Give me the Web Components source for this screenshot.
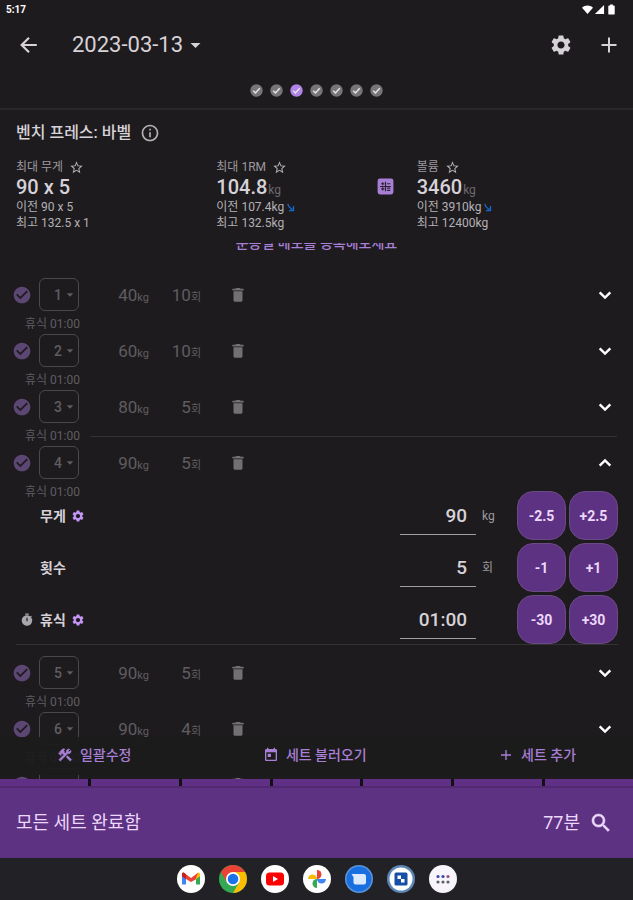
<!DOCTYPE html>
<html lang="ko">
<head>
<meta charset="utf-8">
<meta name="viewport" content="width=device-width, initial-scale=1">
<title>벤치 프레스: 바벨</title>
<style>
  html, body { margin: 0; height: 100%; }
  body {
    --bg: #1e1b1e; --text: #d6d2d8; --muted: #9c999e; --dim: #5f5d61; --line: #353236;
    --accent: #a87fd6; --purple: #5e3282; --lilac: #ecd8fc;
    background: var(--bg); color: var(--text);
    font-family: Roboto, "Noto Sans CJK KR", sans-serif;
  }
</style>
</head>
<body>
<workout-screen>
  <status-bar slot="top" time="5:17"></status-bar>
  <app-header slot="top">2023-03-13</app-header>
  <exercise-dots slot="top" count="7" current="3"></exercise-dots>

  <exercise-summary slot="top" name="벤치 프레스: 바벨">
    <stat-card label="최대 무게" value="90 x 5" previous="90 x 5" best="132.5 x 1"></stat-card>
    <stat-card label="최대 1RM" value="104.8" unit="kg" previous="107.4kg" best="132.5kg" down calc></stat-card>
    <stat-card label="볼륨" value="3460" unit="kg" previous="3910kg" best="12400kg" down></stat-card>
  </exercise-summary>

  <memo-link>운동별 메모를 등록해보세요</memo-link>
  <set-row number="1" weight="40" reps="10" rest="01:00"></set-row>
  <set-row number="2" weight="60" reps="10" rest="01:00"></set-row>
  <set-row number="3" weight="80" reps="5" rest="01:00" divider></set-row>
  <set-row number="4" weight="90" reps="5" rest="01:00" open>
    <value-editor label="무게" value="90" unit="kg" step="2.5" gear></value-editor>
    <value-editor label="횟수" value="5" unit="회" step="1"></value-editor>
    <value-editor label="휴식" value="01:00" step="30" gear timer></value-editor>
  </set-row>
  <set-row number="5" weight="90" reps="5" rest="01:00"></set-row>
  <set-row number="6" weight="90" reps="4" rest="01:00"></set-row>
  <set-row number="7" weight="80" reps="10"></set-row>

  <action-bar slot="actions">
    <action-button icon="tools">일괄수정</action-button>
    <action-button icon="calendar">세트 불러오기</action-button>
    <action-button icon="plus">세트 추가</action-button>
  </action-bar>
  <complete-bar slot="bottom" segments="7" duration="77분">모든 세트 완료함</complete-bar>
  <task-bar slot="bottom"></task-bar>
</workout-screen>

<script>
const ICONS = {
  back: '<path d="M20.5 12H4M12 4l-8 8 8 8" fill="none" stroke="currentColor" stroke-width="2.4"/>',
  caret: '<path d="M4 8h16l-8 8z"/>',
  gear: '<path d="M19.14 12.94c.04-.3.06-.61.06-.94 0-.32-.02-.64-.07-.94l2.03-1.58c.18-.14.23-.41.12-.61l-1.92-3.32c-.12-.22-.37-.29-.59-.22l-2.39.96c-.5-.38-1.03-.7-1.62-.94l-.36-2.54c-.04-.24-.24-.41-.48-.41h-3.84c-.24 0-.43.17-.47.41l-.36 2.54c-.59.24-1.13.57-1.62.94l-2.39-.96c-.22-.08-.47 0-.59.22L2.74 8.87c-.12.21-.08.47.12.61l2.03 1.58c-.05.3-.09.63-.09.94s.02.64.07.94l-2.03 1.58c-.18.14-.23.41-.12.61l1.92 3.32c.12.22.37.29.59.22l2.39-.96c.5.38 1.03.7 1.62.94l.36 2.54c.05.24.24.41.48.41h3.84c.24 0 .44-.17.47-.41l.36-2.54c.59-.24 1.13-.56 1.62-.94l2.39.96c.22.08.47 0 .59-.22l1.92-3.32c.12-.22.07-.47-.12-.61l-2.01-1.58zM12 15.6c-1.98 0-3.6-1.62-3.6-3.6s1.62-3.6 3.6-3.6 3.6 1.62 3.6 3.6-1.62 3.6-3.6 3.6z"/>',
  plus: '<path d="M12 4.5v15M4.5 12h15" fill="none" stroke="currentColor" stroke-width="2"/>',
  info: '<path d="M11 7h2v2h-2zm0 4h2v6h-2zm1-9C6.48 2 2 6.48 2 12s4.48 10 10 10 10-4.48 10-10S17.52 2 12 2zm0 18c-4.41 0-8-3.59-8-8s3.59-8 8-8 8 3.59 8 8-3.59 8-8 8z"/>',
  star: '<path d="M22 9.24l-7.19-.62L12 2 9.19 8.63 2 9.24l5.46 4.73L5.82 21 12 17.27 18.18 21l-1.63-7.03L22 9.24zM12 15.4l-3.76 2.27 1-4.28-3.32-2.88 4.38-.38L12 6.1l1.71 4.04 4.38.38-3.32 2.88 1 4.28L12 15.4z"/>',
  trend: '<path d="M5 2q1 9 12 15M20 8v12H8" fill="none" stroke="currentColor" stroke-width="3.6"/>',
  calc: '<rect x="2" y="2" width="20" height="20" rx="3"/><path d="M6.5 8.500h4M14 8.500h4M8.500 6.500v4M6.500 15h4M8.500 13v4M14 14h4M14 17h4M5 12h14M12 6v12" fill="none" stroke="#2c2333" stroke-width="1.5"/>',
  check: '<path d="M12 2C6.48 2 2 6.48 2 12s4.48 10 10 10 10-4.48 10-10S17.52 2 12 2zm-2 15l-5-5 1.41-1.41L10 14.17l7.59-7.59L19 8l-9 9z"/>',
  dot: '<circle cx="12" cy="12" r="11.5"/><path d="M6 12.5l4 4 8-8.500" fill="none" stroke="#e6e4e6" stroke-width="2.8"/>',
  trash: '<path d="M6 19c0 1.1.9 2 2 2h8c1.1 0 2-.9 2-2V7H6v12zM19.5 3.500h-4l-1-1h-5l-1 1h-4v2.500h15z"/>',
  down: '<path d="M4 8l8 8 8-8" fill="none" stroke="currentColor" stroke-width="3.6"/>',
  up: '<path d="M4 16l8-8 8 8" fill="none" stroke="currentColor" stroke-width="3.6"/>',
  timer: '<path d="M15 1H9v2h6V1zm4.03 6.39 1.42-1.42c-.43-.51-.9-.99-1.41-1.41l-1.42 1.42A8.962 8.962 0 0 0 12 4c-4.97 0-9 4.03-9 9s4.02 9 9 9a8.994 8.994 0 0 0 7.03-14.61zM13 14h-2V8h2v6z"/>',
  tools: '<path d="M13.78 15.17l2.12-2.12 6 6-2.12 2.12zM17.5 10c1.93 0 3.5-1.57 3.5-3.5 0-.58-.16-1.12-.41-1.6l-2.7 2.7-1.49-1.49 2.7-2.7c-.48-.25-1.02-.41-1.6-.41C15.57 3 14 4.57 14 6.5c0 .41.08.8.21 1.16l-1.85 1.85-1.78-1.78.71-.71-1.41-1.41L12 3.49c-1.17-1.17-3.07-1.17-4.24 0L4.22 7.03l1.41 1.41H2.81l-.71.71 3.54 3.54.71-.71V9.15l1.41 1.41.71-.71 1.78 1.78-7.41 7.41 2.12 2.12L16.34 9.79c.36.13.75.21 1.16.21z" stroke="currentColor" stroke-width=".8"/>',
  calendar: '<path d="M19 3h-1V1h-2v2H8V1H6v2H5c-1.11 0-1.99.9-1.99 2L3 19c0 1.1.89 2 2 2h14c1.1 0 2-.9 2-2V5c0-1.1-.9-2-2-2zm0 16H5V8h14v11zM7 10h5v5H7z"/>',
  search: '<path d="M15.5 14h-.79l-.28-.27C15.41 12.59 16 11.11 16 9.5 16 5.91 13.09 3 9.5 3S3 5.91 3 9.5 5.91 16 9.5 16c1.61 0 3.09-.59 4.23-1.57l.27.28v.79l5 4.99L20.49 19l-4.99-5zm-6 0C7.01 14 5 11.99 5 9.5S7.01 5 9.5 5 14 7.01 14 9.5 11.99 14 9.5 14z" stroke="currentColor" stroke-width=".5"/>',
  wifi: '<path d="M12 22L0 8C3 4.500 7.500 3 12 3s9 1.500 12 5z"/>',
  signal: '<path d="M2 22L22 2v20z"/>',
  battery: '<path d="M9 1h6v2h2a2 2 0 0 1 2 2v16a2 2 0 0 1-2 2H7a2 2 0 0 1-2-2V5a2 2 0 0 1 2-2h2z"/>'
};

const APPS = {
  Gmail: '<circle cx="14" cy="14" r="14" fill="#fff"/><path d="M5 9.5v10h4v-7z" fill="#4285f4"/><path d="M23 9.5v10h-4v-7z" fill="#34a853"/><path d="M19 9.2l2-1.4q2-.8 2 1.7v1.7l-4 3z" fill="#fbbc04"/><path d="M5 11.2V9.500q0-2.500 2-1.700l7 5.200 7-5.200-2 5.400v1L14 17l-5-3z" fill="#ea4335"/><path d="M5 9.500q0-2.500 2-1.700l2 1.500v4.900l-4-3z" fill="#c5221f"/>',
  Chrome: '<circle cx="14" cy="14" r="14" fill="#34a853"/><path d="M14 14L1.900 7A14 14 0 0 1 26.100 7z" fill="#ea4335"/><path d="M14 7h12.100A14 14 0 0 1 14 28l6-10.500z" fill="#fbbc04"/><path d="M1.900 7L8 17.500 14 7z" fill="#ea4335"/><circle cx="14" cy="14" r="7" fill="#fff"/><circle cx="14" cy="14" r="5.300" fill="#1a73e8"/>',
  YouTube: '<circle cx="14" cy="14" r="14" fill="#fff"/><rect x="5" y="7.500" width="18" height="13" rx="3.500" fill="#f00"/><path d="M12 11v6l5-3z" fill="#fff"/>',
  Photos: '<circle cx="14" cy="14" r="14" fill="#fff"/><path d="M14 14V5a4.500 4.500 0 0 1 0 9z" fill="#ea4335"/><path d="M14 14h9a4.500 4.500 0 0 1-9 0z" fill="#4285f4"/><path d="M14 14v9a4.500 4.500 0 0 1 0-9z" fill="#34a853"/><path d="M14 14H5a4.500 4.500 0 0 1 9 0z" fill="#fbbc04"/>',
  Messages: '<circle cx="14" cy="14" r="14" fill="#5b93da"/><circle cx="14" cy="14" r="12.500" fill="#1a6fe0"/><path d="M6.500 9H19q2 0 2 2v6.500q0 2-2 2h-8.500q-2 0-2-2V12z" fill="#dbe9fd"/>',
  Dice: '<circle cx="14" cy="14" r="14" fill="#5d86b5"/><circle cx="14" cy="14" r="11.500" fill="#fff"/><rect x="7.500" y="7.500" width="13" height="13" rx="1.500" fill="#174ea6"/><path d="M10.500 10.500h3.500v3.500h-3.500zM14 14h3.500v3.500H14z" fill="#fff"/>',
  Apps: '<circle cx="14" cy="14" r="14" fill="#f7f5fb"/><g fill="#3949ab"><circle cx="9" cy="11.500" r="1.600"/><circle cx="14" cy="11.500" r="1.600"/></g><circle cx="19" cy="11.500" r="1.600" fill="#a0506e"/><g fill="#5f6368"><circle cx="9" cy="17" r="1.600"/><circle cx="14" cy="17" r="1.600"/><circle cx="19" cy="17" r="1.600"/></g>'
};

const RESET = `
  *, *::before { box-sizing: border-box; }
  :host { box-sizing: border-box; }
  button, input, select { font: inherit; color: inherit; background: none; border: 0; margin: 0; padding: 0; }
  button { cursor: pointer; display: inline-flex; align-items: center; justify-content: center; }
`;

/* Base class: renders styles and markup into an open shadow root. */
class Base extends HTMLElement {
  connectedCallback() {
    if (this.shadowRoot) return;
    const t = document.createElement('template');
    t.innerHTML = `<style>${RESET}${this.css()}</style>${this.html()}`;
    this.attachShadow({ mode: 'open' }).append(t.content.cloneNode(true));
    this.ready();
  }
  a(n) { return this.getAttribute(n) || ''; }
  css() { return ''; }
  html() { return '<slot></slot>'; }
  ready() {}
}

class UiIcon extends Base {
  css() { return `:host { display: inline-block; flex: none; width: var(--size, 24px); height: var(--size, 24px); }
    svg { display: block; width: 100%; height: 100%; fill: currentColor; }`; }
  html() { return `<svg viewBox="0 0 24 24" aria-hidden="true">${ICONS[this.a('name')]}</svg>`; }
}

class WorkoutScreen extends Base {
  css() { return `:host { display: flex; flex-direction: column; height: 100vh; overflow: hidden; }
    .list { flex: 1; min-height: 0; overflow: hidden; position: relative; }
    .over { position: absolute; left: 0; right: 0; bottom: 4px; }`; }
  html() { return `<slot name="top"></slot>
    <main class="list"><slot></slot><div class="over"><slot name="actions"></slot></div></main>
    <slot name="bottom"></slot>`; }
}

class StatusBar extends Base {
  css() { return `:host { display: flex; align-items: center; gap: 1px; height: 18px; padding: 0 16px 0 6px; color: #fff; font-size: 10px; font-weight: 700; }
    span { flex: 1; } ui-icon { --size: 11px; }`; }
  html() { return `<span>${this.a('time')}</span><ui-icon name="wifi"></ui-icon><ui-icon name="signal"></ui-icon><ui-icon name="battery"></ui-icon>`; }
}

class AppHeader extends Base {
  css() { return `:host { display: flex; align-items: center; height: 54px; padding: 0 12px 0 18px; }
    .back { --size: 22px; margin-right: 32px; }
    .date { font-size: 22px; line-height: 28px; gap: 5px; }
    .date ui-icon { --size: 15px; }
    .end { margin-left: auto; display: flex; gap: 24px; }`; }
  html() { return `<button class="back" aria-label="뒤로"><ui-icon name="back"></ui-icon></button>
    <button class="date"><slot></slot><ui-icon name="caret"></ui-icon></button>
    <div class="end"><button aria-label="설정"><ui-icon name="gear"></ui-icon></button><button aria-label="추가"><ui-icon name="plus"></ui-icon></button></div>`; }
}

class ExerciseDots extends Base {
  css() { return `:host { display: flex; justify-content: center; align-items: center; gap: 7px; height: 38px; border-bottom: 2px solid #2a272b; }
    ui-icon { --size: 13px; color: #777578; } .on { color: #b084e6; }`; }
  html() { let h = ''; for (let i = 1; i <= +this.a('count'); i++) h += `<ui-icon name="dot" class="${i === +this.a('current') ? 'on' : ''}"></ui-icon>`; return h; }
}

class ExerciseSummary extends Base {
  css() { return `:host { display: block; padding: 11px 16px 12px; }
    h1 { display: flex; align-items: center; gap: 9px; height: 24px; margin: 0 0 14px; font-size: 16px; line-height: 24px; font-weight: 500; }
    button { --size: 20px; color: #b5b2b7; }
    .stats { display: grid; grid-template-columns: repeat(3, 1fr); }`; }
  html() { return `<h1>${this.a('name')}<button aria-label="정보"><ui-icon name="info"></ui-icon></button></h1><div class="stats"><slot></slot></div>`; }
}

class StatCard extends Base {
  css() { return `:host { display: flex; align-items: flex-start; font-size: 12px; line-height: 16px; color: #b4b1b6; }
    .body { flex: 1; }
    .body > div { display: flex; align-items: center; height: 16px; }
    .label { color: var(--muted); gap: 6px; --size: 15px; }
    .label button { color: #b4b1b6; }
    .body > .value { align-items: baseline; height: 24px; font-size: 20px; line-height: 24px; font-weight: 500; color: var(--text); }
    small { margin-left: 1px; font-size: 12px; font-weight: 400; color: #6c696e; }
    .trend { --size: 9px; color: #1767c8; margin-left: 2px; }
    .calc { --size: 19px; color: var(--accent); margin: 18px 22px 0 0; }`; }
  html() { return `<div class="body">
      <div class="label">${this.a('label')}<button aria-label="즐겨찾기"><ui-icon name="star"></ui-icon></button></div>
      <div class="value">${this.a('value')}<small>${this.a('unit')}</small></div>
      <div>이전 ${this.a('previous')}${this.hasAttribute('down') ? '<ui-icon class="trend" name="trend"></ui-icon>' : ''}</div>
      <div>최고 ${this.a('best')}</div>
    </div>${this.hasAttribute('calc') ? '<button class="calc" aria-label="계산기"><ui-icon name="calc"></ui-icon></button>' : ''}`; }
}

class MemoLink extends Base {
  css() { return `:host { display: block; height: 20px; margin: -10px 0 25px; text-align: center; font-size: 14px; line-height: 20px; font-weight: 500; }
    a { color: var(--accent); text-decoration: none; }`; }
  html() { return `<a href="#memo"><slot></slot></a>`; }
}

class SetRow extends Base {
  css() { return `:host { display: block; }
    .main { display: flex; align-items: center; height: 33px; padding: 0 16px 0 12px; color: var(--dim); }
    label, .chip { display: grid; align-items: center; }
    label > *, .chip > * { grid-area: 1 / 1; }
    .done { --size: 20px; color: #5c4673; margin-right: 7px; }
    .done input { opacity: 0; width: 18px; height: 18px; }
    .chip { width: 40px; --size: 10px; }
    select { appearance: none; width: 40px; height: 33px; padding-left: 14px; border: 1px solid #4a484b; border-radius: 6px; font-size: 14px; font-weight: 500; }
    .chip ui-icon { justify-self: end; margin-right: 4px; pointer-events: none; }
    .num { display: flex; justify-content: flex-end; align-items: baseline; height: 24px; font-size: 17px; line-height: 24px; }
    .num small { font-size: 11px; line-height: 16px; }
    .w { width: 70px; } .r { width: 52px; }
    .trash { --size: 18px; margin-left: 28px; color: #737074; }
    .toggle { --size: 16px; margin-left: auto; margin-right: 4px; color: #fff; }
    .rest { display: flex; align-items: center; gap: 10px; height: 23px; padding: 5px 16px 2px 25px; font-size: 12px; line-height: 16px; color: var(--dim); }
    hr { flex: 1; height: 1px; margin: 0; border: 0; background: var(--line); }
    .panel { margin: -11px 15px 11px 16px; display: grid; gap: 3px; border-bottom: 1px solid var(--line); }
    .panel[hidden] { display: none; }`; }
  html() {
    const n = this.a('number'), open = this.hasAttribute('open');
    return `<div class="main">
      <label class="done"><input type="checkbox" checked aria-label="세트 ${n} 완료"><ui-icon name="check"></ui-icon></label>
      <span class="chip"><select aria-label="세트 종류"><option>${n}</option></select><ui-icon name="caret"></ui-icon></span>
      <span class="num w">${this.a('weight')}<small>kg</small></span>
      <span class="num r">${this.a('reps')}<small>회</small></span>
      <button class="trash" aria-label="삭제"><ui-icon name="trash"></ui-icon></button>
      <button class="toggle" aria-label="펼치기"><ui-icon name="${open ? 'up' : 'down'}"></ui-icon></button>
    </div>
    ${this.a('rest') ? `<div class="rest"><span>휴식 ${this.a('rest')}</span>${this.hasAttribute('divider') ? '<hr>' : ''}</div>` : ''}
    ${open ? '<div class="panel"><slot></slot></div>' : ''}`;
  }
  ready() {
    this.shadowRoot.querySelector('.toggle').addEventListener('click', () => {
      const p = this.shadowRoot.querySelector('.panel');
      if (p) p.hidden = !p.hidden;
    });
  }
}

class ValueEditor extends Base {
  css() { return `:host { display: flex; align-items: center; height: 49px; }
    .lead { --size: 14px; width: 24px; padding-left: 4px; color: #aaa7ac; display: flex; }
    label { font-size: 14px; line-height: 20px; font-weight: 700; }
    .gear { --size: 14px; margin-left: 5px; color: #c396f6; }
    .field { width: 76px; height: 38px; margin-left: auto; padding-right: 9px; text-align: right; font-size: 19px; font-weight: 500; border-bottom: 1px solid #a09da1; border-radius: 0; outline: 0; }
    .unit { width: 41px; padding-left: 6px; font-size: 12px; line-height: 16px; color: var(--muted); }
    .steps { display: flex; gap: 3px; }
    .steps button { width: 49px; height: 49px; border-radius: 16px; border: 1px solid #6a4a84; background: var(--purple); color: var(--lilac); font-size: 14px; font-weight: 700; }`; }
  html() {
    const has = n => this.hasAttribute(n), s = this.a('step');
    return `<span class="lead">${has('timer') ? '<ui-icon name="timer"></ui-icon>' : ''}</span>
      <label for="v">${this.a('label')}</label>
      ${has('gear') ? '<button class="gear" aria-label="설정"><ui-icon name="gear"></ui-icon></button>' : ''}
      <input class="field" id="v" type="text" value="${this.a('value')}">
      <span class="unit">${this.a('unit')}</span>
      <div class="steps"><button>-${s}</button><button>+${s}</button></div>`;
  }
}

class ActionBar extends Base {
  css() { return `:host { display: flex; justify-content: space-between; align-items: center; height: 38px; padding: 0 9%; background: rgb(29 28 29 / .94); }`; }
}

class ActionButton extends Base {
  css() { return `:host { display: block; }
    button { --size: 16px; gap: 7px; color: var(--accent); font-size: 14px; line-height: 20px; font-weight: 500; }`; }
  html() { return `<button><ui-icon name="${this.a('icon')}"></ui-icon><slot></slot></button>`; }
}

class CompleteBar extends Base {
  css() { return `:host { display: block; background: var(--purple); color: var(--lilac); font-size: 18px; line-height: 24px; }
    .seg { display: flex; gap: 3px; height: 7px; background: #121013; }
    .seg i { flex: 1; background: #603086; }
    .bar { display: flex; align-items: center; gap: 9px; height: 72px; padding: 0 20px 0 16px; border-top: 2px solid #522871; }
    .bar span:first-child { flex: 1; }
    button { --size: 24px; }`; }
  html() { return `<div class="seg">${'<i></i>'.repeat(+this.a('segments'))}</div>
    <div class="bar"><span><slot></slot></span><span>${this.a('duration')}</span><button aria-label="검색"><ui-icon name="search"></ui-icon></button></div>`; }
}

class TaskBar extends Base {
  css() { return `:host { display: flex; flex: none; justify-content: center; align-items: center; gap: 14px; height: 42px; background: #222126; }
    svg { display: block; width: 28px; height: 28px; }`; }
  html() { return Object.entries(APPS).map(([n, s]) => `<button aria-label="${n}"><svg viewBox="0 0 28 28" aria-hidden="true">${s}</svg></button>`).join(''); }
}

Object.entries({
  'ui-icon': UiIcon, 'workout-screen': WorkoutScreen, 'status-bar': StatusBar, 'app-header': AppHeader,
  'exercise-dots': ExerciseDots, 'exercise-summary': ExerciseSummary, 'stat-card': StatCard, 'memo-link': MemoLink,
  'set-row': SetRow, 'value-editor': ValueEditor, 'action-bar': ActionBar, 'action-button': ActionButton,
  'complete-bar': CompleteBar, 'task-bar': TaskBar
}).forEach(([n, c]) => customElements.define(n, c));
</script>
</body>
</html>
